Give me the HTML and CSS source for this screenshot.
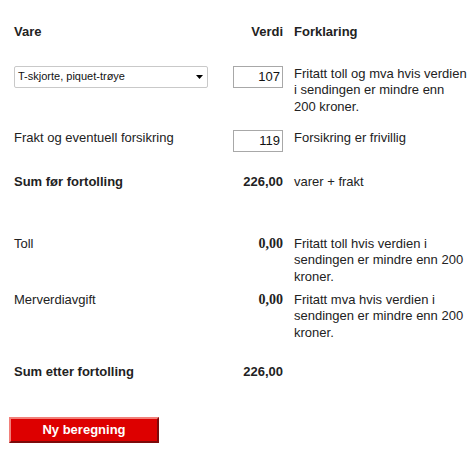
FILE: index.html
```html
<!DOCTYPE html>
<html lang="no">
<head>
<meta charset="utf-8">
<title>Tollkalkulator</title>
<link rel="stylesheet" href="styles.css">
</head>
<body>
<main class="calc">
  <div class="row row-head">
    <div class="label">Vare</div>
    <div class="value">Verdi</div>
    <div class="note">Forklaring</div>
  </div>
  <div class="row row-item">
    <div class="label">
      <div class="select">
        <span>T-skjorte, piquet-trøye</span>
        <svg class="caret" width="7" height="4" viewBox="0 0 7 4"><path d="M0 0H7L3.5 4Z" fill="#000"/></svg>
      </div>
    </div>
    <div class="value"><input class="num" type="text" value="107"></div>
    <div class="note">Fritatt toll og mva hvis verdien i sendingen er mindre enn 200 kroner.</div>
  </div>
  <div class="row row-freight">
    <div class="label">Frakt og eventuell forsikring</div>
    <div class="value"><input class="num" type="text" value="119"></div>
    <div class="note">Forsikring er frivillig</div>
  </div>
  <div class="row row-sum">
    <div class="label strong">Sum før fortolling</div>
    <div class="value strong">226,00</div>
    <div class="note">varer + frakt</div>
  </div>
  <div class="row row-duty">
    <div class="label">Toll</div>
    <div class="value serif">0,00</div>
    <div class="note">Fritatt toll hvis verdien i sendingen er mindre enn 200 kroner.</div>
  </div>
  <div class="row row-vat">
    <div class="label">Merverdiavgift</div>
    <div class="value serif">0,00</div>
    <div class="note">Fritatt mva hvis verdien i sendingen er mindre enn 200 kroner.</div>
  </div>
  <div class="row row-total">
    <div class="label strong">Sum etter fortolling</div>
    <div class="value strong">226,00</div>
    <div class="note"></div>
  </div>
</main>
<div class="actions">
  <button class="btn" type="button">Ny beregning</button>
</div>
</body>
</html>
```
FILE: styles.css
```css
html, body {
  margin: 0;
  padding: 0;
  background: #fff;
}
body {
  font-family: "Liberation Sans", Arial, sans-serif;
  font-size: 13px;
  line-height: 16.7px;
  color: #222;
}
.calc {
  padding: 24px 0 0 14px;
}
.row {
  display: grid;
  grid-template-columns: 208px 50px 174px;
  column-gap: 11px;
  align-items: start;
}
.row-head {
  font-weight: bold;
}
.value {
  text-align: right;
}
.strong {
  font-weight: bold;
}
.serif {
  font-family: "Liberation Serif", "Times New Roman", serif;
  font-size: 14px;
  font-weight: bold;
}
.row-item { margin-top: 25px; }
.row-freight { margin-top: 14px; }
.row-sum { margin-top: 22px; }
.row-duty { margin-top: 45px; }
.row-vat { margin-top: 6px; }
.row-total { margin-top: 22px; }

.select {
  box-sizing: border-box;
  width: 194px;
  height: 22px;
  border: 1px solid #c9c9c9;
  border-radius: 2px;
  padding: 0 4px 0 3px;
  display: flex;
  align-items: center;
  justify-content: space-between;
  font-size: 11px;
  color: #111;
  background: #fff;
}
.caret {
  display: block;
  margin-top: 1px;
}
.num {
  box-sizing: border-box;
  width: 50px;
  height: 22px;
  margin: 0;
  border: 1px solid #a8a8a8;
  padding: 0 2px 0 3px;
  font-family: "Liberation Sans", Arial, sans-serif;
  font-size: 13px;
  color: #111;
  text-align: right;
  background: #fff;
  outline: none;
  display: block;
}
.actions {
  padding: 37px 0 0 9px;
}
.btn {
  box-sizing: border-box;
  width: 150px;
  height: 26px;
  margin: 0;
  padding: 0;
  background: #dd0000;
  border: 2px solid;
  border-color: #f2807a #7d0a0a #7d0a0a #f2807a;
  color: #fff;
  font-family: "Liberation Sans", Arial, sans-serif;
  font-size: 13px;
  font-weight: bold;
  line-height: 20px;
  cursor: pointer;
}
```
